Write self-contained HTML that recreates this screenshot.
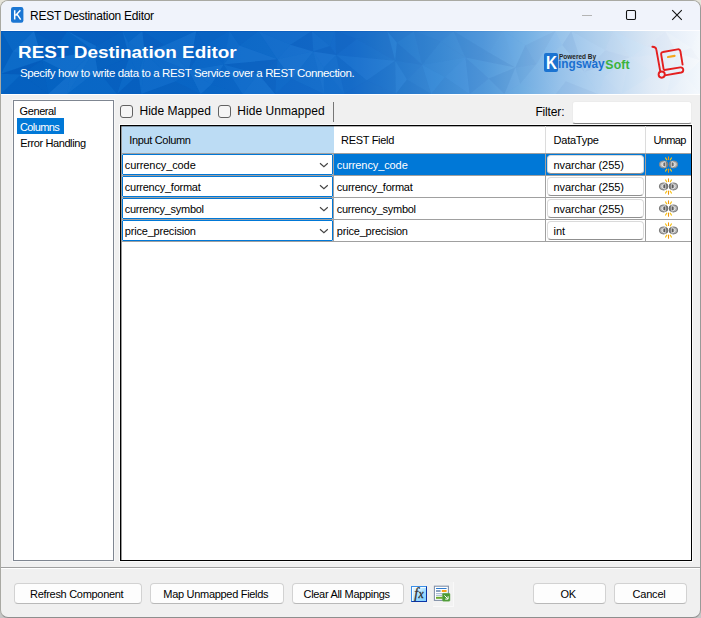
<!DOCTYPE html>
<html>
<head>
<meta charset="utf-8">
<title>REST Destination Editor</title>
<style>
html,body{margin:0;padding:0;}
body{width:701px;height:618px;position:relative;overflow:hidden;background:#d6d6d6;font-family:"Liberation Sans",sans-serif;font-size:11px;color:#000;}
.a{position:absolute;box-sizing:border-box;}
.t{position:absolute;white-space:nowrap;}
.btn{position:absolute;box-sizing:border-box;border:1px solid #d2d2d2;border-bottom-color:#b9b9b9;border-radius:4px;background:#fdfdfd;}
.combo{position:absolute;box-sizing:border-box;border:1px solid #0078d7;border-radius:1px;background:#fff;}
.dt{position:absolute;box-sizing:border-box;border:1px solid #dadada;border-bottom-color:#8f8f8f;border-radius:4px;background:#fff;}
.chk{position:absolute;box-sizing:border-box;width:13px;height:13px;border:1px solid #626262;border-radius:3px;background:#f5f5f5;}
</style>
</head>
<body>

<div class="a" style="left:0px;top:0px;width:701px;height:618px;background:linear-gradient(180deg,#e6e4da 0px,#e2e0d8 20px,#cfcfcf 300px,#c6c6c6 618px);"></div>
<div class="a" style="left:0px;top:0px;width:701px;height:618px;border:1px solid #a9a9a3;border-right-color:#9a9a98;border-bottom-color:#8e8e8e;border-radius:8px;background:#f0f0f0;"></div>
<div class="a" style="left:1px;top:1px;width:699px;height:616px;border-radius:7px;overflow:hidden;">
<div class="a" style="left:-1px;top:-1px;width:701px;height:618px;">
<div class="a" style="left:1px;top:1px;width:699px;height:29px;background:#f0f3fb;"></div>
<svg class="a" style="left:11px;top:7px" width="13" height="16" viewBox="0 0 13 16">
<rect x="0" y="0" width="12.4" height="15.8" rx="2.2" fill="#1b76d3"/>
<path d="M3.7 3.2V12.6 M9.4 3.2L4.6 8.4 M5.9 7.1L9.7 12.6" stroke="#fff" stroke-width="1.5" fill="none"/>
</svg>
<div class="t" style="left:30px;top:8.03px;font-size:12px;line-height:16px;color:#000;letter-spacing:-0.26px;">REST Destination Editor</div>
<svg class="a" style="left:575px;top:4px" width="120" height="24" viewBox="0 0 120 24">
<path d="M7 11.5H17" stroke="#b4b4b4" stroke-width="1"/>
<rect x="51.5" y="6.5" width="9" height="9" rx="1.2" fill="none" stroke="#111" stroke-width="1.1"/>
<path d="M97.2 6.2L106.8 15.8 M106.8 6.2L97.2 15.8" stroke="#111" stroke-width="1.1"/>
</svg>
<div class="a" style="left:1px;top:30px;width:699px;height:1px;background:#fdfdff;"></div>
<div class="a" style="left:1px;top:31px;width:699px;height:63px;overflow:hidden;background:linear-gradient(90deg,#0564c3 0%,#0a66c6 30%,#176ecb 50%,#2a7ed0 57%,#3c8bd5 63%,#5299db 69%,#72aee2 74.5%,#98c3ea 80%,#b9d5f0 86%,#dfeaf6 93%,#f6f9fc 100%);">
<svg class="a" style="left:0;top:0" width="699" height="63" viewBox="0 0 699 63"><polygon points="0.0,0.0 33.1,0.0 11.8,20.5" fill="#5cb2ff" opacity="0.041"/><polygon points="33.1,0.0 41.3,28.9 11.8,20.5" fill="#5cb2ff" opacity="0.137"/><polygon points="41.3,28.9 0.0,42.8 11.8,20.5" fill="#5cb2ff" opacity="0.090"/><polygon points="0.0,42.8 0.0,0.0 11.8,20.5" fill="#003a9a" opacity="0.073"/><polygon points="33.1,0.0 66.3,0.0 56.7,14.4" fill="#003a9a" opacity="0.160"/><polygon points="66.3,0.0 93.2,20.1 56.7,14.4" fill="#003a9a" opacity="0.013"/><polygon points="93.2,20.1 41.3,28.9 56.7,14.4" fill="#003a9a" opacity="0.110"/><polygon points="41.3,28.9 33.1,0.0 56.7,14.4" fill="#003a9a" opacity="0.129"/><polygon points="66.3,0.0 121.4,0.0 95.4,14.9" fill="#003a9a" opacity="0.121"/><polygon points="121.4,0.0 128.2,26.2 95.4,14.9" fill="#003a9a" opacity="0.081"/><polygon points="128.2,26.2 93.2,20.1 95.4,14.9" fill="#003a9a" opacity="0.035"/><polygon points="93.2,20.1 66.3,0.0 95.4,14.9" fill="#5cb2ff" opacity="0.101"/><polygon points="121.4,0.0 141.4,0.0 127.2,11.4" fill="#5cb2ff" opacity="0.013"/><polygon points="141.4,0.0 143.7,21.9 127.2,11.4" fill="#5cb2ff" opacity="0.099"/><polygon points="143.7,21.9 128.2,26.2 127.2,11.4" fill="#5cb2ff" opacity="0.083"/><polygon points="128.2,26.2 121.4,0.0 127.2,11.4" fill="#5cb2ff" opacity="0.096"/><polygon points="141.4,0.0 195.3,0.0 163.7,14.3" fill="#003a9a" opacity="0.043"/><polygon points="195.3,0.0 187.9,39.5 163.7,14.3" fill="#5cb2ff" opacity="0.095"/><polygon points="187.9,39.5 143.7,21.9 163.7,14.3" fill="#5cb2ff" opacity="0.116"/><polygon points="143.7,21.9 141.4,0.0 163.7,14.3" fill="#003a9a" opacity="0.110"/><polygon points="195.3,0.0 228.6,0.0 203.6,14.9" fill="#003a9a" opacity="0.078"/><polygon points="228.6,0.0 222.6,33.6 203.6,14.9" fill="#003a9a" opacity="0.004"/><polygon points="222.6,33.6 187.9,39.5 203.6,14.9" fill="#5cb2ff" opacity="0.022"/><polygon points="187.9,39.5 195.3,0.0 203.6,14.9" fill="#003a9a" opacity="0.071"/><polygon points="228.6,0.0 257.4,0.0 238.5,14.4" fill="#003a9a" opacity="0.037"/><polygon points="257.4,0.0 276.4,28.3 238.5,14.4" fill="#5cb2ff" opacity="0.015"/><polygon points="276.4,28.3 222.6,33.6 238.5,14.4" fill="#5cb2ff" opacity="0.105"/><polygon points="222.6,33.6 228.6,0.0 238.5,14.4" fill="#5cb2ff" opacity="0.045"/><polygon points="257.4,0.0 310.9,0.0 289.5,13.7" fill="#5cb2ff" opacity="0.039"/><polygon points="310.9,0.0 312.2,20.5 289.5,13.7" fill="#003a9a" opacity="0.115"/><polygon points="312.2,20.5 276.4,28.3 289.5,13.7" fill="#5cb2ff" opacity="0.087"/><polygon points="276.4,28.3 257.4,0.0 289.5,13.7" fill="#5cb2ff" opacity="0.063"/><polygon points="310.9,0.0 334.4,0.0 329.0,14.9" fill="#003a9a" opacity="0.027"/><polygon points="334.4,0.0 335.1,24.1 329.0,14.9" fill="#003a9a" opacity="0.025"/><polygon points="335.1,24.1 312.2,20.5 329.0,14.9" fill="#003a9a" opacity="0.100"/><polygon points="312.2,20.5 310.9,0.0 329.0,14.9" fill="#5cb2ff" opacity="0.028"/><polygon points="334.4,0.0 386.2,0.0 355.7,8.0" fill="#003a9a" opacity="0.069"/><polygon points="386.2,0.0 394.2,29.7 355.7,8.0" fill="#003a9a" opacity="0.076"/><polygon points="394.2,29.7 335.1,24.1 355.7,8.0" fill="#003a9a" opacity="0.038"/><polygon points="335.1,24.1 334.4,0.0 355.7,8.0" fill="#003a9a" opacity="0.111"/><polygon points="386.2,0.0 413.1,0.0 395.9,11.4" fill="#003a9a" opacity="0.087"/><polygon points="413.1,0.0 421.1,33.7 395.9,11.4" fill="#003a9a" opacity="0.029"/><polygon points="421.1,33.7 394.2,29.7 395.9,11.4" fill="#003a9a" opacity="0.102"/><polygon points="394.2,29.7 386.2,0.0 395.9,11.4" fill="#5cb2ff" opacity="0.069"/><polygon points="413.1,0.0 452.6,0.0 439.6,10.6" fill="#003a9a" opacity="0.051"/><polygon points="452.6,0.0 464.5,26.5 439.6,10.6" fill="#003a9a" opacity="0.029"/><polygon points="464.5,26.5 421.1,33.7 439.6,10.6" fill="#003a9a" opacity="0.027"/><polygon points="421.1,33.7 413.1,0.0 439.6,10.6" fill="#003a9a" opacity="0.080"/><polygon points="452.6,0.0 502.4,0.0 488.9,22.0" fill="#003a9a" opacity="0.006"/><polygon points="502.4,0.0 514.4,36.5 488.9,22.0" fill="#003a9a" opacity="0.003"/><polygon points="514.4,36.5 464.5,26.5 488.9,22.0" fill="#003a9a" opacity="0.073"/><polygon points="464.5,26.5 452.6,0.0 488.9,22.0" fill="#003a9a" opacity="0.076"/><polygon points="502.4,0.0 554.3,0.0 524.2,14.5" fill="#5cb2ff" opacity="0.042"/><polygon points="554.3,0.0 535.3,33.4 524.2,14.5" fill="#003a9a" opacity="0.050"/><polygon points="535.3,33.4 514.4,36.5 524.2,14.5" fill="#003a9a" opacity="0.076"/><polygon points="514.4,36.5 502.4,0.0 524.2,14.5" fill="#5cb2ff" opacity="0.062"/><polygon points="554.3,0.0 570.2,0.0 561.2,14.1" fill="#5cb2ff" opacity="0.005"/><polygon points="570.2,0.0 583.3,41.0 561.2,14.1" fill="#003a9a" opacity="0.062"/><polygon points="583.3,41.0 535.3,33.4 561.2,14.1" fill="#5cb2ff" opacity="0.003"/><polygon points="535.3,33.4 554.3,0.0 561.2,14.1" fill="#5cb2ff" opacity="0.058"/><polygon points="570.2,0.0 612.3,0.0 604.3,19.2" fill="#003a9a" opacity="0.029"/><polygon points="612.3,0.0 628.8,26.2 604.3,19.2" fill="#003a9a" opacity="0.014"/><polygon points="628.8,26.2 583.3,41.0 604.3,19.2" fill="#003a9a" opacity="0.038"/><polygon points="583.3,41.0 570.2,0.0 604.3,19.2" fill="#5cb2ff" opacity="0.029"/><polygon points="612.3,0.0 664.3,0.0 645.8,15.5" fill="#003a9a" opacity="0.016"/><polygon points="664.3,0.0 675.8,21.9 645.8,15.5" fill="#003a9a" opacity="0.022"/><polygon points="675.8,21.9 628.8,26.2 645.8,15.5" fill="#5cb2ff" opacity="0.023"/><polygon points="628.8,26.2 612.3,0.0 645.8,15.5" fill="#5cb2ff" opacity="0.043"/><polygon points="664.3,0.0 699.0,0.0 690.0,16.7" fill="#5cb2ff" opacity="0.019"/><polygon points="699.0,0.0 699.0,29.4 690.0,16.7" fill="#5cb2ff" opacity="0.012"/><polygon points="699.0,29.4 675.8,21.9 690.0,16.7" fill="#003a9a" opacity="0.019"/><polygon points="675.8,21.9 664.3,0.0 690.0,16.7" fill="#5cb2ff" opacity="0.001"/><polygon points="0.0,42.8 41.3,28.9 19.9,43.5" fill="#003a9a" opacity="0.160"/><polygon points="41.3,28.9 47.2,63.0 19.9,43.5" fill="#003a9a" opacity="0.074"/><polygon points="47.2,63.0 0.0,63.0 19.9,43.5" fill="#003a9a" opacity="0.081"/><polygon points="0.0,63.0 0.0,42.8 19.9,43.5" fill="#5cb2ff" opacity="0.054"/><polygon points="41.3,28.9 93.2,20.1 69.1,43.1" fill="#5cb2ff" opacity="0.119"/><polygon points="93.2,20.1 66.3,63.0 69.1,43.1" fill="#5cb2ff" opacity="0.132"/><polygon points="66.3,63.0 47.2,63.0 69.1,43.1" fill="#5cb2ff" opacity="0.125"/><polygon points="47.2,63.0 41.3,28.9 69.1,43.1" fill="#003a9a" opacity="0.045"/><polygon points="93.2,20.1 128.2,26.2 96.6,39.6" fill="#003a9a" opacity="0.098"/><polygon points="128.2,26.2 116.1,63.0 96.6,39.6" fill="#003a9a" opacity="0.094"/><polygon points="116.1,63.0 66.3,63.0 96.6,39.6" fill="#5cb2ff" opacity="0.033"/><polygon points="66.3,63.0 93.2,20.1 96.6,39.6" fill="#5cb2ff" opacity="0.109"/><polygon points="128.2,26.2 143.7,21.9 137.4,43.3" fill="#5cb2ff" opacity="0.040"/><polygon points="143.7,21.9 140.3,63.0 137.4,43.3" fill="#5cb2ff" opacity="0.078"/><polygon points="140.3,63.0 116.1,63.0 137.4,43.3" fill="#003a9a" opacity="0.132"/><polygon points="116.1,63.0 128.2,26.2 137.4,43.3" fill="#5cb2ff" opacity="0.042"/><polygon points="143.7,21.9 187.9,39.5 174.3,50.4" fill="#5cb2ff" opacity="0.063"/><polygon points="187.9,39.5 199.7,63.0 174.3,50.4" fill="#003a9a" opacity="0.007"/><polygon points="199.7,63.0 140.3,63.0 174.3,50.4" fill="#003a9a" opacity="0.099"/><polygon points="140.3,63.0 143.7,21.9 174.3,50.4" fill="#5cb2ff" opacity="0.075"/><polygon points="187.9,39.5 222.6,33.6 210.3,53.5" fill="#5cb2ff" opacity="0.115"/><polygon points="222.6,33.6 241.6,63.0 210.3,53.5" fill="#003a9a" opacity="0.030"/><polygon points="241.6,63.0 199.7,63.0 210.3,53.5" fill="#003a9a" opacity="0.029"/><polygon points="199.7,63.0 187.9,39.5 210.3,53.5" fill="#5cb2ff" opacity="0.110"/><polygon points="222.6,33.6 276.4,28.3 257.2,42.8" fill="#003a9a" opacity="0.105"/><polygon points="276.4,28.3 274.2,63.0 257.2,42.8" fill="#003a9a" opacity="0.095"/><polygon points="274.2,63.0 241.6,63.0 257.2,42.8" fill="#5cb2ff" opacity="0.093"/><polygon points="241.6,63.0 222.6,33.6 257.2,42.8" fill="#5cb2ff" opacity="0.072"/><polygon points="276.4,28.3 312.2,20.5 290.9,47.8" fill="#5cb2ff" opacity="0.104"/><polygon points="312.2,20.5 322.9,63.0 290.9,47.8" fill="#5cb2ff" opacity="0.033"/><polygon points="322.9,63.0 274.2,63.0 290.9,47.8" fill="#003a9a" opacity="0.039"/><polygon points="274.2,63.0 276.4,28.3 290.9,47.8" fill="#5cb2ff" opacity="0.011"/><polygon points="312.2,20.5 335.1,24.1 322.7,36.5" fill="#5cb2ff" opacity="0.098"/><polygon points="335.1,24.1 343.4,63.0 322.7,36.5" fill="#5cb2ff" opacity="0.030"/><polygon points="343.4,63.0 322.9,63.0 322.7,36.5" fill="#5cb2ff" opacity="0.005"/><polygon points="322.9,63.0 312.2,20.5 322.7,36.5" fill="#5cb2ff" opacity="0.091"/><polygon points="335.1,24.1 394.2,29.7 365.8,49.6" fill="#5cb2ff" opacity="0.063"/><polygon points="394.2,29.7 394.7,63.0 365.8,49.6" fill="#003a9a" opacity="0.064"/><polygon points="394.7,63.0 343.4,63.0 365.8,49.6" fill="#003a9a" opacity="0.058"/><polygon points="343.4,63.0 335.1,24.1 365.8,49.6" fill="#003a9a" opacity="0.051"/><polygon points="394.2,29.7 421.1,33.7 406.0,48.4" fill="#003a9a" opacity="0.052"/><polygon points="421.1,33.7 430.2,63.0 406.0,48.4" fill="#003a9a" opacity="0.017"/><polygon points="430.2,63.0 394.7,63.0 406.0,48.4" fill="#003a9a" opacity="0.079"/><polygon points="394.7,63.0 394.2,29.7 406.0,48.4" fill="#5cb2ff" opacity="0.075"/><polygon points="421.1,33.7 464.5,26.5 443.8,46.0" fill="#5cb2ff" opacity="0.014"/><polygon points="464.5,26.5 468.6,63.0 443.8,46.0" fill="#5cb2ff" opacity="0.063"/><polygon points="468.6,63.0 430.2,63.0 443.8,46.0" fill="#003a9a" opacity="0.016"/><polygon points="430.2,63.0 421.1,33.7 443.8,46.0" fill="#5cb2ff" opacity="0.071"/><polygon points="464.5,26.5 514.4,36.5 487.8,47.6" fill="#5cb2ff" opacity="0.003"/><polygon points="514.4,36.5 503.4,63.0 487.8,47.6" fill="#003a9a" opacity="0.080"/><polygon points="503.4,63.0 468.6,63.0 487.8,47.6" fill="#003a9a" opacity="0.011"/><polygon points="468.6,63.0 464.5,26.5 487.8,47.6" fill="#003a9a" opacity="0.060"/><polygon points="514.4,36.5 535.3,33.4 519.3,52.7" fill="#003a9a" opacity="0.052"/><polygon points="535.3,33.4 554.8,63.0 519.3,52.7" fill="#003a9a" opacity="0.004"/><polygon points="554.8,63.0 503.4,63.0 519.3,52.7" fill="#5cb2ff" opacity="0.029"/><polygon points="503.4,63.0 514.4,36.5 519.3,52.7" fill="#5cb2ff" opacity="0.008"/><polygon points="535.3,33.4 583.3,41.0 564.9,50.3" fill="#5cb2ff" opacity="0.006"/><polygon points="583.3,41.0 597.0,63.0 564.9,50.3" fill="#5cb2ff" opacity="0.029"/><polygon points="597.0,63.0 554.8,63.0 564.9,50.3" fill="#003a9a" opacity="0.052"/><polygon points="554.8,63.0 535.3,33.4 564.9,50.3" fill="#5cb2ff" opacity="0.007"/><polygon points="583.3,41.0 628.8,26.2 603.5,45.5" fill="#5cb2ff" opacity="0.026"/><polygon points="628.8,26.2 620.5,63.0 603.5,45.5" fill="#5cb2ff" opacity="0.001"/><polygon points="620.5,63.0 597.0,63.0 603.5,45.5" fill="#5cb2ff" opacity="0.006"/><polygon points="597.0,63.0 583.3,41.0 603.5,45.5" fill="#5cb2ff" opacity="0.026"/><polygon points="628.8,26.2 675.8,21.9 654.1,42.8" fill="#5cb2ff" opacity="0.008"/><polygon points="675.8,21.9 665.5,63.0 654.1,42.8" fill="#5cb2ff" opacity="0.000"/><polygon points="665.5,63.0 620.5,63.0 654.1,42.8" fill="#5cb2ff" opacity="0.001"/><polygon points="620.5,63.0 628.8,26.2 654.1,42.8" fill="#5cb2ff" opacity="0.017"/><polygon points="675.8,21.9 699.0,29.4 684.1,44.7" fill="#003a9a" opacity="0.001"/><polygon points="699.0,29.4 699.0,63.0 684.1,44.7" fill="#5cb2ff" opacity="0.022"/><polygon points="699.0,63.0 665.5,63.0 684.1,44.7" fill="#5cb2ff" opacity="0.012"/><polygon points="665.5,63.0 675.8,21.9 684.1,44.7" fill="#5cb2ff" opacity="0.024"/></svg>
</div>
<div class="t" style="left:18px;top:44.07px;font-size:17.33px;line-height:16px;color:#fff;font-weight:bold;transform:scaleX(1.092);transform-origin:0 0;">REST Destination Editor</div>
<div class="t" style="left:20px;top:64.80px;font-size:11.5px;line-height:16px;color:#fff;letter-spacing:-0.365px;">Specify how to write data to a REST Service over a REST Connection.</div>
<div class="a" style="left:544px;top:53px;width:14px;height:19px;background:#1b73d1;border-radius:2px;"></div>
<div class="t" style="left:545.6px;top:55.32px;font-size:19px;line-height:16px;color:#fff;font-weight:bold;transform:scaleX(0.8);transform-origin:0 0;">K</div>
<div class="t" style="left:559.3px;top:48.75px;font-size:7.4px;line-height:16px;color:#242424;font-weight:bold;transform:scaleX(0.875);transform-origin:0 0;">Powered By</div>
<div class="t" style="left:557.8px;top:56.31px;font-size:13.6px;line-height:16px;color:#1a6fd0;font-weight:bold;transform:scaleX(0.868);transform-origin:0 0;">ingsway</div>
<div class="t" style="left:605.3px;top:56.73px;font-size:12.3px;line-height:16px;color:#3bb33b;letter-spacing:0.15px;font-weight:bold;">Soft</div>
<svg class="a" style="left:644px;top:40px" width="50" height="44" viewBox="644 40 50 44">
<g fill="none" stroke="#e41f1f" stroke-width="1.9" stroke-linecap="round" stroke-linejoin="round">
<path d="M652.4 46.8 C654.8 47 656 47.4 656.3 49.4 L660.3 71.6"/>
<circle cx="661.7" cy="74.6" r="3.1"/>
<path d="M663.6 69.2 L661.2 54.6 C660.9 53 661.6 52.2 663 52 L677.6 49.4 C679.2 49.1 680.1 49.8 680.4 51.2 L682.6 64.6"/>
<path d="M664.4 70 L680.4 67.4 C683.9 67 684.2 71.8 681.2 72.5 L664.8 75.4"/>
</g>
<path d="M668 57 L674.6 55.9" stroke="#f5a51d" stroke-width="2.1" stroke-linecap="round" fill="none"/>
</svg>
<div class="a" style="left:1px;top:31px;width:699px;height:1px;background:linear-gradient(90deg,rgba(0,70,170,0.4),rgba(0,70,170,0.25) 50%,rgba(0,70,170,0) 80%);"></div>
<div class="a" style="left:1px;top:94px;width:699px;height:1px;background:#fff;"></div>
<div class="a" style="left:12px;top:99px;width:103px;height:463px;border:1px solid #f7f7f7;"></div>
<div class="a" style="left:13px;top:100px;width:101px;height:461px;border:1px solid #7f8691;background:#fff;"></div>
<div class="t" style="left:19.6px;top:102.96px;font-size:11px;line-height:16px;color:#000;letter-spacing:-0.42px;">General</div>
<div class="a" style="left:17px;top:118px;width:47px;height:16px;background:#0078d7;"></div>
<div class="t" style="left:20px;top:118.96px;font-size:11px;line-height:16px;color:#fff;letter-spacing:-0.6px;">Columns</div>
<div class="t" style="left:20.3px;top:134.56px;font-size:11px;line-height:16px;color:#000;letter-spacing:-0.4px;">Error Handling</div>
<div class="chk" style="left:120px;top:105px"></div>
<div class="t" style="left:139.5px;top:102.53px;font-size:12px;line-height:16px;color:#000;">Hide Mapped</div>
<div class="chk" style="left:218px;top:105px"></div>
<div class="t" style="left:237.3px;top:102.53px;font-size:12px;line-height:16px;color:#000;letter-spacing:0.05px;">Hide Unmapped</div>
<div class="a" style="left:333px;top:102px;width:1px;height:20px;background:#767676;"></div>
<div class="t" style="left:535.4px;top:103.63px;font-size:12px;line-height:16px;color:#000;letter-spacing:-0.15px;">Filter:</div>
<div class="a" style="left:572px;top:101px;width:120px;height:23px;border:1px solid #ececec;border-bottom-color:#858585;border-radius:3px;background:#fff;"></div>
<div class="a" style="left:119px;top:124px;width:574px;height:438px;border:1px solid #fcfcfc;"></div>
<div class="a" style="left:120px;top:125px;width:572px;height:436px;border:1px solid #000;background:#fff;"></div>
<div class="a" style="left:121px;top:126px;width:1px;height:434px;background:rgba(0,0,0,0.4);"></div>
<div class="a" style="left:122px;top:126px;width:212px;height:27px;background:#bcdcf4;"></div>
<div class="a" style="left:122px;top:153px;width:569px;height:1px;background:#a0a0a0;"></div>
<div class="a" style="left:121px;top:126px;width:570px;height:1px;background:rgba(0,0,0,0.3);"></div>
<div class="t" style="left:129.2px;top:131.96px;font-size:11px;line-height:16px;color:#000;letter-spacing:-0.33px;">Input Column</div>
<div class="t" style="left:341px;top:131.96px;font-size:11px;line-height:16px;color:#000;letter-spacing:-0.3px;">REST Field</div>
<div class="t" style="left:553.6px;top:131.96px;font-size:11px;line-height:16px;color:#000;letter-spacing:-0.25px;">DataType</div>
<div class="t" style="left:653.4px;top:131.96px;font-size:11px;line-height:16px;color:#000;letter-spacing:-0.65px;">Unmap</div>
<div class="a" style="left:545px;top:126px;width:1px;height:27px;background:#dcdcdc;"></div>
<div class="a" style="left:645px;top:126px;width:1px;height:27px;background:#dcdcdc;"></div>
<div class="a" style="left:334px;top:154px;width:357px;height:21px;background:#0078d7;"></div>
<div class="a" style="left:122px;top:175px;width:569px;height:1px;background:#a0a0a0;"></div>
<div class="combo" style="left:122px;top:154px;width:211px;height:21px;"></div>
<div class="t" style="left:124.8px;top:156.96px;font-size:11px;line-height:16px;color:#000;letter-spacing:-0.1px;">currency_code</div>
<svg class="a" style="left:319px;top:162px" width="10" height="6" viewBox="0 0 10 6"><path d="M1 1.3L4.9 4.8L8.8 1.3" stroke="#444" stroke-width="1.15" fill="none"/></svg>
<div class="t" style="left:336.8px;top:156.96px;font-size:11px;line-height:16px;color:#fff;letter-spacing:-0.1px;">currency_code</div>
<div class="dt" style="left:547px;top:155px;width:97px;height:19px;"></div>
<div class="t" style="left:553.6px;top:156.96px;font-size:11px;line-height:16px;color:#000;letter-spacing:-0.1px;">nvarchar (255)</div>
<svg class="a" style="left:658px;top:156px" width="22" height="18" viewBox="0 0 22 18">
<g stroke-linecap="round" fill="none">
<path d="M10.5 0.7V3.5 M10.5 13.1V16.3" stroke="#f0960a" stroke-width="1.1"/>
<path d="M7.5 1.9L8.8 3.9 M13.5 1.9L12.2 3.9 M7.5 15.1L8.8 13.1 M13.5 15.1L12.2 13.1" stroke="#f7c21a" stroke-width="1.1"/>
</g>
<ellipse cx="5.6" cy="8.4" rx="4.1" ry="3.4" fill="#bcbcbc" stroke="#8a8a8a" stroke-width="1.2"/>
<ellipse cx="15.4" cy="8.4" rx="4.1" ry="3.4" fill="#bcbcbc" stroke="#8a8a8a" stroke-width="1.2"/>
<path d="M7.4 5.8C5.2 6 4 7.2 4 8.4C4 9.6 5.2 10.8 7.4 11" stroke="#f4f4f4" stroke-width="1.0" fill="none"/>
<path d="M13.6 5.8C15.8 6 17 7.2 17 8.4C17 9.6 15.8 10.8 13.6 11" stroke="#f4f4f4" stroke-width="1.0" fill="none"/>
<path d="M6.3 6.6V10.2 M14.7 6.6V10.2" stroke="#6a6a6a" stroke-width="1.5"/>
<path d="M8.9 6V10.8 M12.1 6V10.8" stroke="#6a6a6a" stroke-width="0.9"/>
</svg>
<div class="a" style="left:122px;top:197px;width:569px;height:1px;background:#a0a0a0;"></div>
<div class="combo" style="left:122px;top:176px;width:211px;height:21px;"></div>
<div class="t" style="left:124.8px;top:178.96px;font-size:11px;line-height:16px;color:#000;letter-spacing:-0.25px;">currency_format</div>
<svg class="a" style="left:319px;top:184px" width="10" height="6" viewBox="0 0 10 6"><path d="M1 1.3L4.9 4.8L8.8 1.3" stroke="#444" stroke-width="1.15" fill="none"/></svg>
<div class="t" style="left:336.8px;top:178.96px;font-size:11px;line-height:16px;color:#000;letter-spacing:-0.25px;">currency_format</div>
<div class="dt" style="left:547px;top:177px;width:97px;height:19px;"></div>
<div class="t" style="left:553.6px;top:178.96px;font-size:11px;line-height:16px;color:#000;letter-spacing:-0.1px;">nvarchar (255)</div>
<svg class="a" style="left:658px;top:178px" width="22" height="18" viewBox="0 0 22 18">
<g stroke-linecap="round" fill="none">
<path d="M10.5 0.7V3.5 M10.5 13.1V16.3" stroke="#f0960a" stroke-width="1.1"/>
<path d="M7.5 1.9L8.8 3.9 M13.5 1.9L12.2 3.9 M7.5 15.1L8.8 13.1 M13.5 15.1L12.2 13.1" stroke="#f7c21a" stroke-width="1.1"/>
</g>
<ellipse cx="5.6" cy="8.4" rx="4.1" ry="3.4" fill="#b4b4b4" stroke="#7c7c7c" stroke-width="1.2"/>
<ellipse cx="15.4" cy="8.4" rx="4.1" ry="3.4" fill="#b4b4b4" stroke="#7c7c7c" stroke-width="1.2"/>
<path d="M7.4 5.8C5.2 6 4 7.2 4 8.4C4 9.6 5.2 10.8 7.4 11" stroke="#f6f6f6" stroke-width="1.0" fill="none"/>
<path d="M13.6 5.8C15.8 6 17 7.2 17 8.4C17 9.6 15.8 10.8 13.6 11" stroke="#f6f6f6" stroke-width="1.0" fill="none"/>
<path d="M6.3 6.6V10.2 M14.7 6.6V10.2" stroke="#5c5c5c" stroke-width="1.5"/>
<path d="M8.9 6V10.8 M12.1 6V10.8" stroke="#5c5c5c" stroke-width="0.9"/>
</svg>
<div class="a" style="left:122px;top:219px;width:569px;height:1px;background:#a0a0a0;"></div>
<div class="combo" style="left:122px;top:198px;width:211px;height:21px;"></div>
<div class="t" style="left:124.8px;top:200.96px;font-size:11px;line-height:16px;color:#000;letter-spacing:-0.28px;">currency_symbol</div>
<svg class="a" style="left:319px;top:206px" width="10" height="6" viewBox="0 0 10 6"><path d="M1 1.3L4.9 4.8L8.8 1.3" stroke="#444" stroke-width="1.15" fill="none"/></svg>
<div class="t" style="left:336.8px;top:200.96px;font-size:11px;line-height:16px;color:#000;letter-spacing:-0.28px;">currency_symbol</div>
<div class="dt" style="left:547px;top:199px;width:97px;height:19px;"></div>
<div class="t" style="left:553.6px;top:200.96px;font-size:11px;line-height:16px;color:#000;letter-spacing:-0.1px;">nvarchar (255)</div>
<svg class="a" style="left:658px;top:200px" width="22" height="18" viewBox="0 0 22 18">
<g stroke-linecap="round" fill="none">
<path d="M10.5 0.7V3.5 M10.5 13.1V16.3" stroke="#f0960a" stroke-width="1.1"/>
<path d="M7.5 1.9L8.8 3.9 M13.5 1.9L12.2 3.9 M7.5 15.1L8.8 13.1 M13.5 15.1L12.2 13.1" stroke="#f7c21a" stroke-width="1.1"/>
</g>
<ellipse cx="5.6" cy="8.4" rx="4.1" ry="3.4" fill="#b4b4b4" stroke="#7c7c7c" stroke-width="1.2"/>
<ellipse cx="15.4" cy="8.4" rx="4.1" ry="3.4" fill="#b4b4b4" stroke="#7c7c7c" stroke-width="1.2"/>
<path d="M7.4 5.8C5.2 6 4 7.2 4 8.4C4 9.6 5.2 10.8 7.4 11" stroke="#f6f6f6" stroke-width="1.0" fill="none"/>
<path d="M13.6 5.8C15.8 6 17 7.2 17 8.4C17 9.6 15.8 10.8 13.6 11" stroke="#f6f6f6" stroke-width="1.0" fill="none"/>
<path d="M6.3 6.6V10.2 M14.7 6.6V10.2" stroke="#5c5c5c" stroke-width="1.5"/>
<path d="M8.9 6V10.8 M12.1 6V10.8" stroke="#5c5c5c" stroke-width="0.9"/>
</svg>
<div class="a" style="left:122px;top:241px;width:569px;height:1px;background:#a0a0a0;"></div>
<div class="combo" style="left:122px;top:220px;width:211px;height:21px;"></div>
<div class="t" style="left:124.8px;top:222.96px;font-size:11px;line-height:16px;color:#000;letter-spacing:-0.2px;">price_precision</div>
<svg class="a" style="left:319px;top:228px" width="10" height="6" viewBox="0 0 10 6"><path d="M1 1.3L4.9 4.8L8.8 1.3" stroke="#444" stroke-width="1.15" fill="none"/></svg>
<div class="t" style="left:336.8px;top:222.96px;font-size:11px;line-height:16px;color:#000;letter-spacing:-0.2px;">price_precision</div>
<div class="dt" style="left:547px;top:221px;width:97px;height:19px;"></div>
<div class="t" style="left:553.6px;top:222.96px;font-size:11px;line-height:16px;color:#000;letter-spacing:-0.1px;">int</div>
<svg class="a" style="left:658px;top:222px" width="22" height="18" viewBox="0 0 22 18">
<g stroke-linecap="round" fill="none">
<path d="M10.5 0.7V3.5 M10.5 13.1V16.3" stroke="#f0960a" stroke-width="1.1"/>
<path d="M7.5 1.9L8.8 3.9 M13.5 1.9L12.2 3.9 M7.5 15.1L8.8 13.1 M13.5 15.1L12.2 13.1" stroke="#f7c21a" stroke-width="1.1"/>
</g>
<ellipse cx="5.6" cy="8.4" rx="4.1" ry="3.4" fill="#b4b4b4" stroke="#7c7c7c" stroke-width="1.2"/>
<ellipse cx="15.4" cy="8.4" rx="4.1" ry="3.4" fill="#b4b4b4" stroke="#7c7c7c" stroke-width="1.2"/>
<path d="M7.4 5.8C5.2 6 4 7.2 4 8.4C4 9.6 5.2 10.8 7.4 11" stroke="#f6f6f6" stroke-width="1.0" fill="none"/>
<path d="M13.6 5.8C15.8 6 17 7.2 17 8.4C17 9.6 15.8 10.8 13.6 11" stroke="#f6f6f6" stroke-width="1.0" fill="none"/>
<path d="M6.3 6.6V10.2 M14.7 6.6V10.2" stroke="#5c5c5c" stroke-width="1.5"/>
<path d="M8.9 6V10.8 M12.1 6V10.8" stroke="#5c5c5c" stroke-width="0.9"/>
</svg>
<div class="a" style="left:333px;top:154px;width:1px;height:88px;background:#a0a0a0;"></div>
<div class="a" style="left:545px;top:154px;width:1px;height:88px;background:#a0a0a0;"></div>
<div class="a" style="left:645px;top:154px;width:1px;height:88px;background:#a0a0a0;"></div>
<div class="a" style="left:1px;top:567px;width:699px;height:1px;background:#a0a0a0;"></div>
<div class="a" style="left:1px;top:568px;width:699px;height:1px;background:#fff;"></div>
<div class="btn" style="left:14px;top:583px;width:128px;height:21px;"></div>
<div class="t" style="left:30px;top:586.36px;font-size:11px;line-height:16px;color:#000;letter-spacing:-0.3px;">Refresh Component</div>
<div class="btn" style="left:150px;top:583px;width:133.5px;height:21px;"></div>
<div class="t" style="left:163.3px;top:586.36px;font-size:11px;line-height:16px;color:#000;letter-spacing:-0.3px;">Map Unmapped Fields</div>
<div class="btn" style="left:292px;top:583px;width:112px;height:21px;"></div>
<div class="t" style="left:303.5px;top:586.36px;font-size:11px;line-height:16px;color:#000;letter-spacing:-0.3px;">Clear All Mappings</div>
<div class="btn" style="left:533px;top:583px;width:72.5px;height:21px;"></div>
<div class="t" style="left:560.6px;top:586.36px;font-size:11px;line-height:16px;color:#000;letter-spacing:-0.3px;">OK</div>
<div class="btn" style="left:614px;top:583px;width:73px;height:21px;"></div>
<div class="t" style="left:632.5px;top:586.36px;font-size:11px;line-height:16px;color:#000;letter-spacing:-0.2px;">Cancel</div>
<div class="a" style="left:411px;top:586px;width:16px;height:16px;background:linear-gradient(135deg,#eaf7ff 0%,#c9ebff 40%,#9adbff 60%,#7fd0ff 100%);border:1px solid #0a34a6;border-top-color:#3a8fe8;border-left-color:#3a8fe8;"></div>
<div class="a" style="left:412px;top:587px;width:14px;height:14px;border-top:1px solid rgba(255,255,255,0.8);border-left:1px solid rgba(255,255,255,0.8);"></div>
<div class="t" style="left:414.2px;top:585.57px;font-size:14px;line-height:16px;color:#303030;font-family:'Liberation Serif',serif;font-style:italic;-webkit-text-stroke:0.3px #303030;">f</div>
<div class="t" style="left:418.6px;top:586.40px;font-size:11.5px;line-height:16px;color:#303030;font-family:'Liberation Serif',serif;font-style:italic;-webkit-text-stroke:0.3px #303030;">x</div>
<div class="a" style="left:432.5px;top:582px;width:21px;height:24.5px;border-right:1px solid rgba(255,255,255,0.55);border-bottom:1px solid rgba(255,255,255,0.55);background:rgba(255,255,255,0.18);"></div>
<svg class="a" style="left:433px;top:585px" width="18" height="18" viewBox="0 0 18 18">
<rect x="1.4" y="1.2" width="14" height="14.2" fill="#fff" stroke="#8391a8" stroke-width="1.1"/>
<path d="M3 3.5H13.6" stroke="#2e7bd0" stroke-width="1"/>
<rect x="3" y="5" width="4.6" height="2" fill="#8aa2bf"/>
<rect x="8.8" y="5" width="4.8" height="2" fill="#f5a21b"/>
<path d="M3 8.6H13.6 M3 10.4H9" stroke="#9ab0cc" stroke-width="0.9"/>
<rect x="3" y="11.8" width="7" height="2" fill="#6aa92f"/>
<rect x="9.4" y="8.3" width="7.6" height="7.9" rx="1" fill="#4b9a35" stroke="#6fae58" stroke-width="0.5"/>
<path d="M11.4 10.4L14.8 13.8 M15.1 11.2V14.1H12.2" stroke="#fff" stroke-width="1" fill="none"/>
</svg>
</div></div>
</body></html>
